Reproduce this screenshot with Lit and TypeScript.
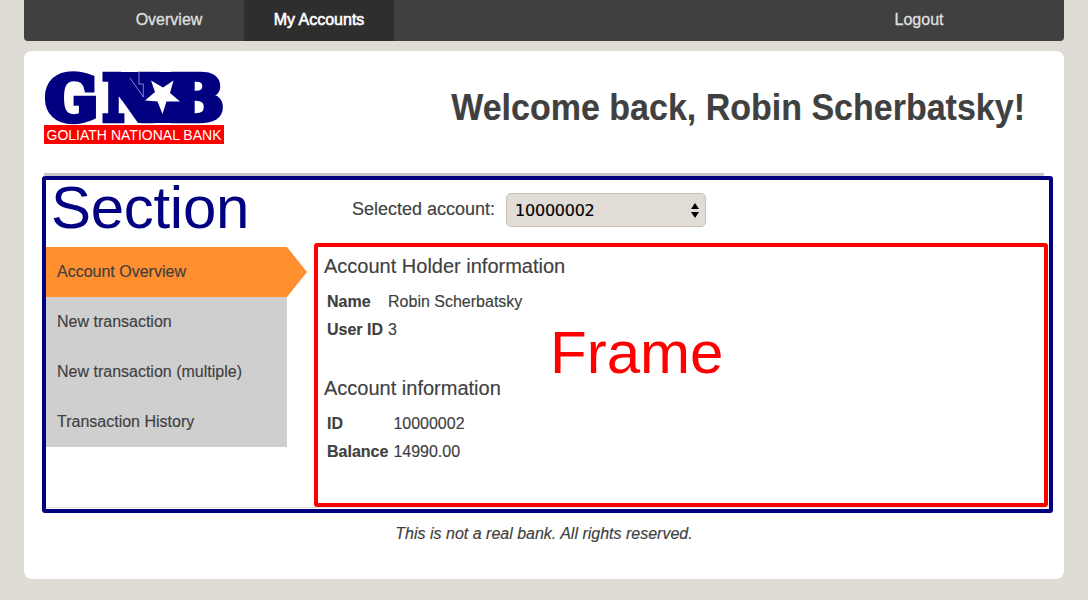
import { LitElement, html, css } from "lit";
import { customElement, property } from "lit/decorators.js";

@customElement("bank-logo")
class BankLogo extends LitElement {
  static styles = css`
    :host { display: block; width: 190px; height: 104px; }
    svg { display: block; }
    .letters { font: bold 61px "DejaVu Serif", serif; fill: #000080; stroke: #000080; stroke-width: 6.4px; stroke-linejoin: miter; }
    .field { fill: #000080; }
    .seam { fill: none; stroke: #fff; stroke-width: 0.5px; }
    .star { fill: #fff; }
    .band { fill: #f00; }
    .strip { font: 14.6px "Liberation Sans", sans-serif; fill: #fff; }
  `;
  render() {
    return html`<svg width="190" height="104" viewBox="38 52 190 104">
      <text class="letters" x="45.5 103 171.5" y="119.5">GNB</text>
      <polygon class="field" points="112,72 190,72 190,123 138,123 112,86" />
      <path class="seam" d="M130 78 143.3 97V84H139V72" />
      <polygon class="star" points="151,80.5 163,87.5 173.5,80.5 170,93 180,101.5 166.5,101.5 162.5,114 157.5,101.5 145,100.5 155,92" />
      <rect class="band" x="44" y="125" width="180" height="19" />
      <text class="strip" x="46.5" y="140" textLength="175" lengthAdjust="spacingAndGlyphs">GOLIATH NATIONAL BANK</text>
    </svg>`;
  }
}

@customElement("info-block")
class InfoBlock extends LitElement {
  @property() heading = "";
  @property({ attribute: false }) rows: [string, string][] = [];
  static styles = css`
    :host { display: block; height: 122px; }
    h2 { margin: 0 0 14px; font-size: 20px; line-height: 24px; font-weight: normal; }
    .rows { display: grid; grid-template-columns: max-content max-content; column-gap: 5px; row-gap: 8px; margin-left: 3px; line-height: 20px; font-size: 16px; }
    .label { font-weight: bold; }
  `;
  render() {
    return html`<h2>${this.heading}</h2>
      <div class="rows">
        ${this.rows.map(([k, v]) => html`<span class="label">${k}</span><span>${v}</span>`)}
      </div>`;
  }
}

@customElement("app-root")
class AppRoot extends LitElement {
  static styles = css`
    :host { display: block; position: relative; box-sizing: border-box; height: 600px; padding: 0 24px; overflow: hidden; background: #dfdcd5; color: #404040; font: 16px "Liberation Sans", Arial, sans-serif; -webkit-text-stroke: 0.15px currentColor; }
    nav { display: flex; height: 41px; background: #404040; border-radius: 0 0 4px 4px; color: #dfdfdf; }
    .tab { width: 150px; text-align: center; line-height: 39px; -webkit-text-stroke: 0.35px currentColor; }
    .tab.first { margin-left: 70px; }
    .tab.active { background: #2e2e2e; color: #fff; -webkit-text-stroke: 0.6px currentColor; }
    .tab.last { margin-left: auto; margin-right: 70px; }
    main { box-sizing: border-box; height: 528px; margin-top: 10px; padding: 0 20px; background: #fff; border-radius: 8px; }
    header { display: flex; justify-content: space-between; height: 122px; border-bottom: 3px solid #c6c6c6; }
    bank-logo { margin: 1px 0 0 -6px; }
    h1 { height: 40px; margin: 36px 19px 0 0; font-size: 34px; line-height: 40px; white-space: nowrap; transform: scaleY(1.06); }
    .picker { display: flex; align-items: center; box-sizing: border-box; height: 71px; padding: 0 0 3px 308px; font-size: 18px; }
    .label { padding-bottom: 2px; }
    .select { display: flex; align-items: center; justify-content: space-between; box-sizing: border-box; width: 200px; height: 34px; margin-left: 11px; padding: 0 6px 0 8px; border: 1px solid #c5c0b9; border-radius: 5px; background: #e1dcd6; color: #000; font: 16px "DejaVu Sans", sans-serif; letter-spacing: -0.25px; }
    .body { display: flex; box-sizing: border-box; height: 261px; border-bottom: 1px solid #e4e4e4; }
    .menu { width: 243px; }
    .item { height: 50px; padding-left: 13px; line-height: 49px; background: #cfcfcf; }
    .item.current { width: 250px; background: #ff8f2f; clip-path: polygon(0 0, 243px 0, 263px 50%, 243px 100%, 0 100%); }
    .content { padding: 7px 0 0 37px; }
    footer { padding-top: 16px; text-align: center; font-style: italic; line-height: 20px; }
    .outline { position: absolute; box-sizing: border-box; border: 4px solid; border-radius: 3px; font-size: 60px; line-height: 56px; -webkit-text-stroke: 0; }
    .section { left: 42px; top: 176px; width: 1011px; height: 337px; padding: 0 0 0 5px; color: #000080; letter-spacing: -0.3px; }
    .frame { left: 314px; top: 243px; width: 734px; height: 264px; padding: 78px 0 0 232px; color: #f00; }
  `;
  items = ["Account Overview", "New transaction", "New transaction (multiple)", "Transaction History"];
  render() {
    return html`
      <nav>
        <div class="tab first">Overview</div>
        <div class="tab active">My Accounts</div>
        <div class="tab last">Logout</div>
      </nav>
      <main>
        <header><bank-logo></bank-logo><h1>Welcome back, Robin Scherbatsky!</h1></header>
        <div class="picker">
          <span class="label">Selected account:</span>
          <div class="select">
            <span>10000002</span>
            <svg width="8" height="15" viewBox="0 0 8 15"><path d="M0 6 4 0 8 6ZM0 9H8L4 15Z" /></svg>
          </div>
        </div>
        <div class="body">
          <div class="menu">
            ${this.items.map((t, i) => html`<div class="item ${i === 0 ? "current" : ""}">${t}</div>`)}
          </div>
          <div class="content">
            <info-block heading="Account Holder information" .rows=${[["Name", "Robin Scherbatsky"], ["User ID", "3"]]}></info-block>
            <info-block heading="Account information" .rows=${[["ID", "10000002"], ["Balance", "14990.00"]]}></info-block>
          </div>
        </div>
        <footer>This is not a real bank. All rights reserved.</footer>
      </main>
      <div class="outline section">Section</div>
      <div class="outline frame">Frame</div>
    `;
  }
}
